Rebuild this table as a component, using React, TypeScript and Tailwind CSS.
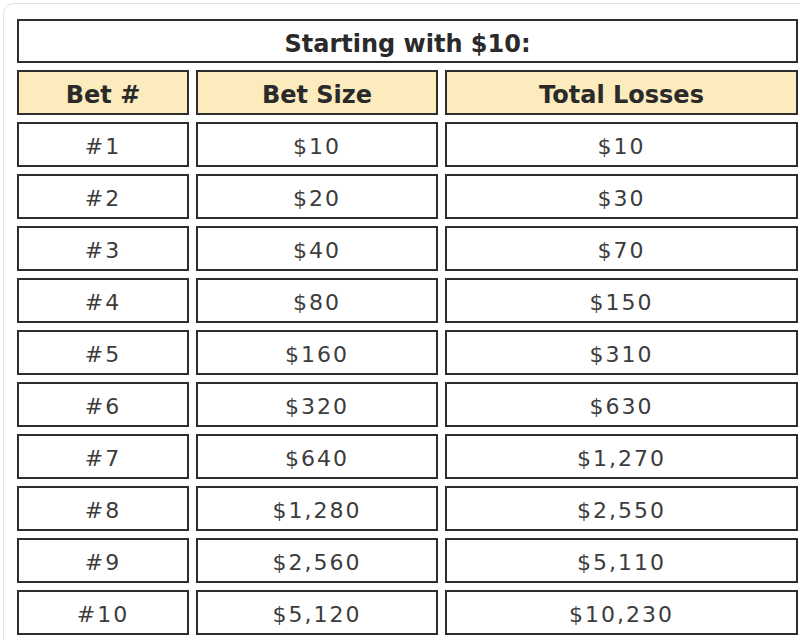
const rows = [
  ["#1", "$10", "$10"],
  ["#2", "$20", "$30"],
  ["#3", "$40", "$70"],
  ["#4", "$80", "$150"],
  ["#5", "$160", "$310"],
  ["#6", "$320", "$630"],
  ["#7", "$640", "$1,270"],
  ["#8", "$1,280", "$2,550"],
  ["#9", "$2,560", "$5,110"],
  ["#10", "$5,120", "$10,230"],
];

export default function App() {
  return (
    <main className="h-[640px] w-[800px] overflow-hidden bg-white">
      {/* faint panel edge */}
      <div className="ml-[3px] mt-[3px] h-[700px] rounded-tl-[10px] border-l border-t border-[#e2e2e2] pl-[13px] pt-[15px] font-['DejaVu_Sans',Verdana,sans-serif]">
        <div className="grid w-[781px] grid-cols-[172px_242px_353px] gap-[7px]">
          <div className="col-span-3 flex h-[44px] items-center justify-center border-2 border-[#2e2e2e] bg-white pt-[5px] text-[24px] font-bold leading-none text-[#2a2a2a]">
            Starting with $10:
          </div>
          {["Bet #", "Bet Size", "Total Losses"].map((h) => (
            <div
              key={h}
              className="flex h-[45px] items-center justify-center border-2 border-[#2e2e2e] bg-[#fcebbd] pt-[5px] text-[24px] font-bold leading-none text-[#2a2a2a]"
            >
              {h}
            </div>
          ))}
          {rows.map((r) =>
            r.map((c, i) => (
              <div
                key={r[0] + i}
                className="flex h-[45px] items-center justify-center border-2 border-[#2e2e2e] bg-white pt-[5px] text-[22px] leading-none tracking-[2px] text-[#3c3c3c]"
              >
                {c}
              </div>
            ))
          )}
        </div>
      </div>
    </main>
  );
}
